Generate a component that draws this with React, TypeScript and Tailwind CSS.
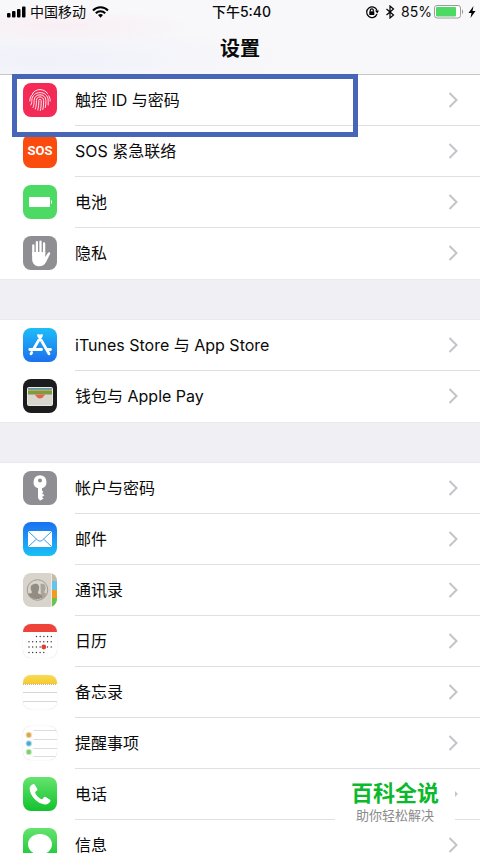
import type { ReactNode } from "react";

const fontStack = "font-['Inter','Noto_Sans_CJK_SC',sans-serif]";

function Tile({ children, className = "" }: { children?: ReactNode; className?: string }) {
  return (
    <svg viewBox="0 0 34 34" className={`size-[34px] shrink-0 rounded-lg ${className}`} aria-hidden="true">
      {children}
    </svg>
  );
}

const TouchIdIcon = () => (
  <Tile className="bg-[#f42b57]">
    <g fill="none" stroke="#fff" strokeWidth="1" strokeLinecap="round" opacity="0.9">
      <path d="M9.5 10.5C13 5.2 21 5.2 24.5 10.5" />
      <path d="M6.8 18c0-3 1-5.500 3.200-7.200M27.200 18c0-2-.5-3.800-1.500-5.200" />
      <path d="M7.800 22c1-1.500 1-3 1-4.500 0-10.500 16.400-10.500 16.400 0v4.500" />
      <path d="M10 24.500c1-2 1.100-4 1.100-7 0-7.600 11.800-7.600 11.800 0 0 2.500 0 4.800-.6 7" />
      <path d="M12.300 26c1-2.500 1.100-5 1.100-8.500 0-4.800 7.200-4.800 7.200 0 0 3.500 0 6-.8 9" />
      <path d="M14.800 27c.8-3 1-6 1-9.500 0-1.600 2.400-1.600 2.400 0 0 4-.1 7-.9 10" />
    </g>
  </Tile>
);

const SosIcon = () => (
  <span className="flex size-[34px] shrink-0 items-center justify-center rounded-lg bg-[#fb4c0d] font-['Roboto',sans-serif] text-[13px] font-bold text-white">
    SOS
  </span>
);

const BatteryIcon = () => (
  <Tile className="bg-[#4cd964]">
    <rect x="6" y="12" width="21" height="10" rx="1" fill="#fff" />
    <path d="M28 15c1.500.5 1.500 3.500 0 4z" fill="#fff" />
  </Tile>
);

const PrivacyIcon = () => (
  <Tile className="bg-[#8e8e93]">
    <g fill="none" stroke="#fff" strokeWidth="2.300" strokeLinecap="round">
      <path d="M10.300 19V9.500M13.900 17V6.200M17.500 17V5.600M21.100 18V7.500" />
    </g>
    <path d="M9.150 16h13.100v5l2.600-4c.9-1.300 2.900-.5 2.200 1.100l-4.100 8.200c-1.500 2.900-3.400 4-6.700 4-4.400 0-7.100-2.800-7.100-7.300z" fill="#fff" />
  </Tile>
);

const AppStoreIcon = () => (
  <Tile>
    <defs>
      <linearGradient id="store" x2="0" y2="1">
        <stop stopColor="#1dbdf8" />
        <stop offset="1" stopColor="#1c70ee" />
      </linearGradient>
    </defs>
    <rect width="34" height="34" fill="url(#store)" />
    <g fill="none" stroke="#fff" strokeWidth="2.800" strokeLinecap="round">
      <path d="M18.500 7.500 10.300 21.500M8.700 24.500 8 25.800M15.500 7.500 26 25.800M6.800 21.500H18.500M23.500 21.500h4" />
    </g>
  </Tile>
);

const WalletIcon = () => (
  <Tile className="bg-[#1c1c1e]">
    <rect x="4" y="8" width="26" height="19" rx="2" fill="#e9e8e2" />
    <path d="M5 11v-1q0-1 1-1h22q1 0 1 1v1z" fill="#5b9db0" />
    <path d="M5 10.800h24V13H5z" fill="#c9a94a" />
    <path d="M5 12h24v4H5z" fill="#7d9a45" />
    <path d="M5 15.500h24V25q0 1-1 1H6q-1 0-1-1z" fill="#d9d6cd" />
    <path d="M11.500 15.500h11c-1.500.3-2 4-5.500 4s-4-3.700-5.500-4z" fill="#e4644f" />
  </Tile>
);

const KeyIcon = () => (
  <Tile className="bg-[#8e8e93]">
    <path
      fillRule="evenodd"
      d="M17 4.300a6.700 6.700 0 0 0-2 13V27l2 2.700 3.600-2.200-1.600-1.600 2.400-1.700-2.400-1.900 1.400-1.300-1.400-1.500v-2.200a6.700 6.700 0 0 0-2-13zm0 3.200a2 2 0 1 1 0 4 2 2 0 0 1 0-4z"
      fill="#fff"
    />
  </Tile>
);

const MailIcon = () => (
  <Tile>
    <defs>
      <linearGradient id="mail" x2="0" y2="1">
        <stop stopColor="#1b70ef" />
        <stop offset="1" stopColor="#1bc0f6" />
      </linearGradient>
    </defs>
    <rect width="34" height="34" fill="url(#mail)" />
    <rect x="5" y="9" width="24" height="16" rx="1.500" fill="#fff" />
    <path d="m5.500 9.500 9.300 8.800q2.200 2 4.400 0l9.300-8.800M5.500 24.500l8-7.500M28.500 24.500l-8-7.500" fill="none" stroke="#419fe5" strokeWidth="1" />
  </Tile>
);

const ContactsIcon = () => (
  <Tile className="bg-[#d8d4cb]">
    <path d="M29 0h5v8h-5z" fill="#c9b8a6" />
    <path d="M29 8h5v9h-5z" fill="#62c4ec" />
    <path d="M29 17h5v8h-5z" fill="#f29b22" />
    <path d="M29 25h5v9h-5z" fill="#6ac44c" />
    <path d="M28.500 0v34" stroke="#eeeae2" />
    <circle cx="14.500" cy="17" r="10.300" fill="none" stroke="#a09c95" />
    <path d="M17.500 11.200c3-1.500 5.500.6 5 4.300-.2 1.800-1.300 2.700-1 4.200l2 1c-1 2.600-3.200 4.600-5.500 5.500z" fill="#aaa49b" />
    <path d="M11.500 11c3-.8 5 1.200 4.600 4.500-.2 2-1.300 3-1.100 4.700 1.500 1 4.500 1.200 4.500 3.800-3.500 3-8.500 3-12 0-1.300-1-2-2-2.600-3 1-.9 3-.5 4-1.300.2-1.500-1-2.400-1.200-4.200-.3-2.500 1-4.300 3.800-4.500z" fill="#928c84" />
  </Tile>
);

const CalendarIcon = () => (
  <Tile className="bg-white shadow-[0_0_1px_#c8c8c8]">
    <rect width="34" height="8" fill="#ee4339" />
    <g stroke="#333" strokeWidth="1.400" strokeLinecap="round" strokeDasharray="0 3.700">
      <path d="M13.500 12.500h15M6 17.800h23M6 23h23M6 28.500h15.500" />
    </g>
    <circle cx="20.800" cy="23" r="2.400" fill="#e43d36" />
  </Tile>
);

const NotesIcon = () => (
  <Tile className="bg-white shadow-[0_0_1px_#c8c8c8]">
    <defs>
      <linearGradient id="notes" x2="0" y2="1">
        <stop stopColor="#f8dc54" />
        <stop offset="1" stopColor="#f5c92e" />
      </linearGradient>
    </defs>
    <rect width="34" height="9" fill="url(#notes)" />
    <path d="M0 9.500h34" stroke="#c9b684" strokeDasharray="1 1" />
    <path d="M0 17.500h34M0 26.500h34" stroke="#d7d7d7" />
  </Tile>
);

const RemindersIcon = () => (
  <Tile className="bg-white shadow-[0_0_1px_#c8c8c8]">
    <path d="M10.500 4.500H34M10.500 13.500H34M10.500 22.500H34M10.500 30.500H34" stroke="#dcdcdc" />
    {[
      { y: 9, ring: "#f1ddb8", dot: "#dca64c" },
      { y: 17.5, ring: "#bfe2ef", dot: "#4fa8ca" },
      { y: 26, ring: "#cdeec6", dot: "#82cd72" },
    ].map((item) => (
      <g key={item.y}>
        <circle cx="5.800" cy={item.y} r="3.300" fill={item.ring} />
        <circle cx="5.800" cy={item.y} r="2.200" fill={item.dot} />
      </g>
    ))}
  </Tile>
);

const GreenTile = ({ id, children }: { id: string; children: ReactNode }) => (
  <Tile>
    <defs>
      <linearGradient id={id} x2="0" y2="1">
        <stop stopColor="#65e46f" />
        <stop offset="1" stopColor="#12c22d" />
      </linearGradient>
    </defs>
    <rect width="34" height="34" fill={`url(#${id})`} />
    {children}
  </Tile>
);

const PhoneIcon = () => (
  <GreenTile id="phone">
    <path
      d="M10 7.200c-2 .8-3.500 2.300-3.300 4.800.5 7 7.500 14.500 15 15.500 2.500.3 4.600-1 5.600-3.200.3-.8 0-1.400-.6-1.800l-4-2.400c-.8-.5-1.500-.3-2 .4l-1.200 1.400c-.4.500-.9.500-1.500.2-2.600-1.300-4.700-3.500-5.800-6-.3-.6-.1-1.100.4-1.500l1.300-1c.6-.5.700-1.200.3-1.900l-2.400-4c-.4-.7-1-.8-1.800-.5z"
      fill="#fff"
    />
  </GreenTile>
);

const MessagesIcon = () => (
  <GreenTile id="messages">
    <path d="M17 6c7 0 12 4.500 12 10.300S24 26.500 17 26.500c-1.300 0-2.500-.1-3.600-.4-1.500 1.300-3.200 1.900-5 1.900 1-.9 1.600-2 1.700-3.300C7 23 5 20 5 16.300 5 10.500 10 6 17 6z" fill="#fff" />
  </GreenTile>
);

type Item = { label: string; icon: ReactNode; highlighted?: boolean };

const groups: Item[][] = [
  [
    { label: "触控 ID 与密码", icon: <TouchIdIcon />, highlighted: true },
    { label: "SOS 紧急联络", icon: <SosIcon /> },
    { label: "电池", icon: <BatteryIcon /> },
    { label: "隐私", icon: <PrivacyIcon /> },
  ],
  [
    { label: "iTunes Store 与 App Store", icon: <AppStoreIcon /> },
    { label: "钱包与 Apple Pay", icon: <WalletIcon /> },
  ],
  [
    { label: "帐户与密码", icon: <KeyIcon /> },
    { label: "邮件", icon: <MailIcon /> },
    { label: "通讯录", icon: <ContactsIcon /> },
    { label: "日历", icon: <CalendarIcon /> },
    { label: "备忘录", icon: <NotesIcon /> },
    { label: "提醒事项", icon: <RemindersIcon /> },
    { label: "电话", icon: <PhoneIcon /> },
    { label: "信息", icon: <MessagesIcon /> },
  ],
];

function Row({ item }: { item: Item }) {
  return (
    <li className="group relative">
      <button type="button" className="flex h-[51px] w-full items-center gap-[18px] pl-[23px] text-left">
        <span className="flex pb-[2px]">{item.icon}</span>
        <span className="flex h-full flex-1 items-center justify-between border-b border-[#e0e0e2] pr-[22px] group-last:border-transparent">
          <span>{item.label}</span>
          <svg viewBox="0 0 10 16" className="h-4 w-2.5" fill="none" stroke="#c3c3c8" strokeWidth="2" aria-hidden="true">
            <path d="m1.500 1 7 7-7 7" />
          </svg>
        </span>
      </button>
      {item.highlighted && (
        <span className="pointer-events-none absolute -top-px left-3 z-10 h-[63px] w-[346px] border-[5px] border-[#4866b8]" />
      )}
    </li>
  );
}

function StatusBar() {
  return (
    <div className="grid h-6 grid-cols-[1fr_auto_1fr] items-center pr-1 pl-[7px] text-sm">
      <div className="flex items-center gap-1">
        <svg viewBox="0 0 19 12" className="h-3 w-[19px]" aria-hidden="true">
          <rect x="0" y="7" width="3.500" height="4.500" rx="1" />
          <rect x="5" y="5" width="3.500" height="6.500" rx="1" />
          <rect x="10" y="3" width="3.500" height="8.500" rx="1" />
          <rect x="15" y="0.500" width="3.500" height="11" rx="1" />
        </svg>
        <span>中国移动</span>
        <svg viewBox="0 0 17 12" className="ml-0.5 h-3 w-[17px]" fill="none" stroke="#000" strokeWidth="2" aria-hidden="true">
          <path d="M1 4.500C5 .2 12 .2 16 4.500M3.800 7.300c2.600-2.800 6.800-2.800 9.400 0" />
          <path d="m8.500 11.700-2.500-2.600c1.400-1.500 3.600-1.500 5 0z" fill="#000" stroke="none" />
        </svg>
      </div>
      <time className="font-medium">下午5:40</time>
      <div className="flex items-center justify-end">
        <svg viewBox="0 0 14 14" className="size-3.5" fill="none" stroke="#000" strokeWidth="1.200" aria-hidden="true">
          <path d="M12 9A5.300 5.300 0 1 1 12 5.500" />
          <path d="m10 5.500 4 0-1.700 3z" fill="#000" stroke="none" />
          <rect x="4.300" y="6.300" width="5" height="3.700" fill="#000" stroke="none" />
          <path d="M5.300 6.500V5.300a1.500 1.500 0 0 1 3 0v1.200" />
        </svg>
        <svg viewBox="0 0 10 14" className="mx-1.5 h-3.5 w-2.5" fill="none" stroke="#000" strokeWidth="1.200" aria-hidden="true">
          <path d="m1.500 4 7 6L5 13V1l3.500 3-7 6" />
        </svg>
        <span>85%</span>
        <svg viewBox="0 0 30 14" className="ml-0.5 h-3.5 w-[30px]" aria-hidden="true">
          <rect x="0.500" y="0.500" width="26" height="12.500" rx="2.500" fill="#fff" stroke="#9b9b9b" />
          <rect x="2" y="2" width="20" height="9.500" rx="1" fill="#4cd964" />
          <path d="M28 4.500c1.500.5 1.500 4 0 4.500z" fill="#9b9b9b" />
        </svg>
        <svg viewBox="0 0 8 12" className="ml-1 h-3 w-2" aria-hidden="true">
          <path d="M5.500 0 .5 7h3L2.500 12 7.500 5h-3z" />
        </svg>
      </div>
    </div>
  );
}

export default function App() {
  return (
    <div className={`relative h-screen overflow-hidden bg-[#efeff4] text-base text-[#0a0a0a] ${fontStack}`}>
      <header className="h-[75px] border-b border-[#c5c5c9] bg-[#f8f8fa] bg-[radial-gradient(ellipse_at_12%_35%,#f8eef3,transparent_25%),radial-gradient(ellipse_at_8%_80%,#f0f1fa,transparent_40%)]">
        <StatusBar />
        <h1 className="flex h-[50px] items-center justify-center text-xl font-semibold">设置</h1>
      </header>
      <main className="flex flex-col gap-[41px]">
        {groups.map((group, index) => (
          <ul key={index} className="bg-white shadow-[0_0_1px_#c8c7cc]">
            {group.map((item) => (
              <Row key={item.label} item={item} />
            ))}
          </ul>
        ))}
      </main>
      <aside className="absolute right-[25px] bottom-6 z-20 flex h-[52px] w-[120px] flex-col items-center bg-white">
        <strong className="text-[22px] leading-8 font-bold text-[#0cb92c]">百科全说</strong>
        <span className="text-[13px] leading-3 text-[#8b8b8b]">助你轻松解决</span>
      </aside>
    </div>
  );
}
